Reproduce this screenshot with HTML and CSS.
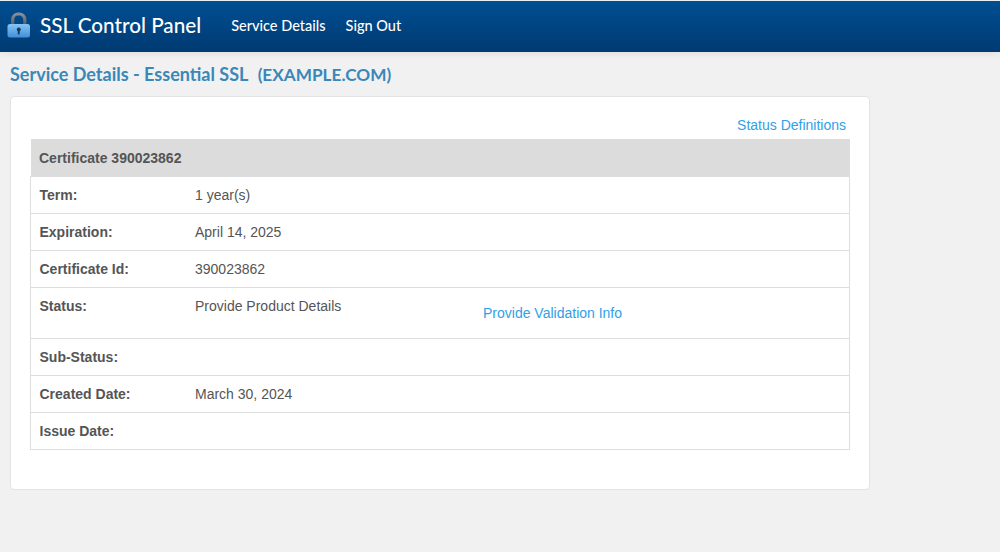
FILE: index.html
```html
<!DOCTYPE html>
<html lang="en">
<head>
<meta charset="utf-8">
<title>SSL Control Panel</title>
<link rel="stylesheet" href="styles.css">
</head>
<body>
<header class="topbar">
  <svg class="lock" viewBox="0 0 25 27" width="25" height="27" aria-hidden="true">
    <defs>
      <linearGradient id="shackle" x1="0" y1="0" x2="0" y2="1"><stop offset="0" stop-color="#8b8f94"/><stop offset="1" stop-color="#555d66"/></linearGradient>
      <linearGradient id="body" x1="0" y1="0" x2="0" y2="1"><stop offset="0" stop-color="#86c4f3"/><stop offset="1" stop-color="#408fd9"/></linearGradient>
    </defs>
    <path d="M6.7 13V7.5A5.5 5.5 0 0 1 12.2 2h1.1a5.5 5.5 0 0 1 5.5 5.5V13" fill="none" stroke="url(#shackle)" stroke-width="3.2"/>
    <rect x="1.5" y="12" width="22.5" height="13.5" rx="2.5" fill="url(#body)"/>
    <circle cx="12.75" cy="17.5" r="2" fill="#123a66"/>
    <rect x="11.8" y="18" width="1.9" height="4.4" fill="#123a66"/>
  </svg>
  <div class="brand">SSL Control Panel</div>
  <nav class="nav">
    <a href="#">Service Details</a>
    <a href="#">Sign Out</a>
  </nav>
</header>
<h1 class="title">Service Details - Essential SSL&nbsp; <span class="domain">(EXAMPLE.COM)</span></h1>
<main class="card">
  <div class="defs"><a href="#">Status Definitions</a></div>
  <table class="cert">
    <colgroup><col class="col-label"><col></colgroup>
    <thead><tr><th colspan="2">Certificate 390023862</th></tr></thead>
    <tbody>
      <tr><th>Term:</th><td>1 year(s)</td></tr>
      <tr><th>Expiration:</th><td>April 14, 2025</td></tr>
      <tr><th>Certificate Id:</th><td>390023862</td></tr>
      <tr class="status"><th>Status:</th><td><div class="status-cols"><span class="status-text">Provide Product Details</span><a class="status-link" href="#">Provide Validation Info</a></div></td></tr>
      <tr><th>Sub-Status:</th><td></td></tr>
      <tr><th>Created Date:</th><td>March 30, 2024</td></tr>
      <tr><th>Issue Date:</th><td></td></tr>
    </tbody>
  </table>
</main>
</body>
</html>
```
FILE: styles.css
```css
* { box-sizing: border-box; }
html, body { margin: 0; padding: 0; }
body {
  height: 552px;
  overflow: hidden;
  background: #f1f1f1;
  font-family: "Liberation Sans", Arial, sans-serif;
  font-size: 14px;
  color: #555;
}
a { color: #2f9fe8; text-decoration: none; }

.topbar {
  height: 52px;
  display: flex;
  align-items: center;
  padding-left: 6px;
  background: linear-gradient(to bottom, #004f93, #003a72);
  border-top: 1px solid #e8eef4;
  box-shadow: 0 2px 8px rgba(0, 0, 0, .08);
}
.lock { display: block; margin-top: -2px; }
.brand {
  margin-left: 9px;
  margin-top: -3px;
  font-family: Lato, sans-serif;
  font-size: 20.7px;
  font-weight: 500;
  color: #fff;
  white-space: nowrap;
}
.nav { display: flex; gap: 20px; margin-left: 30px; margin-top: -2px; }
.nav a {
  font-family: Lato, sans-serif;
  font-size: 14.5px;
  font-weight: 500;
  color: #fff;
}

.title {
  margin: 11px 0 0 10px;
  height: 33px;
  font-family: Lato, sans-serif;
  font-size: 18px;
  line-height: 23px;
  font-weight: 700;
  color: #3a87b8;
}
.domain { font-size: 17.2px; margin-left: 1px; }

.card {
  width: 860px;
  height: 394px;
  margin-left: 10px;
  padding: 20px 19px 0;
  background: #fff;
  border: 1px solid #e3e3e3;
  border-radius: 4px;
}
.defs {
  height: 22px;
  padding-right: 4px;
  text-align: right;
  line-height: 17px;
}
.cert {
  width: 820px;
  border-collapse: collapse;
  table-layout: fixed;
}
.col-label { width: 164.5px; }
.cert thead th {
  height: 37px;
  padding: 2px 8.5px 0;
  background: #dcdcdc;
  text-align: left;
  font-weight: 700;
}
.cert tbody th, .cert tbody td {
  height: 37px;
  padding: 0;
  border-top: 1px solid #ddd;
  border-bottom: 1px solid #ddd;
  text-align: left;
}
.cert tbody th {
  padding-left: 8.5px;
  font-weight: 700;
  border-left: 1px solid #ddd;
}
.cert tbody td { border-right: 1px solid #ddd; }
.cert .status th, .cert .status td {
  height: 51px;
  vertical-align: top;
  padding-top: 10px;
}
.status-cols { display: flex; }
.status-text { width: 288px; }
.status-link { margin-top: 7px; }
```
